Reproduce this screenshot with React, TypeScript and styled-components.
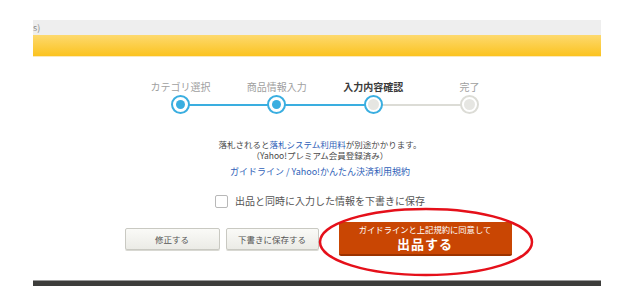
import styled, { createGlobalStyle } from 'styled-components'

const COLORS = {
	blue: '#3aaee0',
	link: '#2f5fb8',
	text: '#4a4a4a',
	grayLine: '#dcdcd6',
	orange: '#c94603',
	orangeDark: '#9c3300'
}

const STEPS = [
	{ label: 'カテゴリ選択', state: 'done' },
	{ label: '商品情報入力', state: 'done' },
	{ label: '入力内容確認', state: 'current' },
	{ label: '完了', state: 'todo' }
] as const

type StepState = (typeof STEPS)[number]['state']

const GlobalStyle = createGlobalStyle`
	html, body {
		margin: 0;
		padding: 0;
		background: #ffffff;
	}
	body {
		font-family: "Noto Sans CJK JP", "Noto Sans", sans-serif;
		color: ${COLORS.text};
	}
`

const App = () => {
	return (
		<>
			<GlobalStyle />
			<Page>
				<TopBar>s)</TopBar>
				<YellowBar />
				<Main>
					<Stepper>
						{STEPS.map((step, i) => (
							<Step key={step.label} $state={step.state} $first={i === 0}>
								<StepLabel $current={step.state === 'current'}>{step.label}</StepLabel>
								<Dot $state={step.state} />
							</Step>
						))}
					</Stepper>

					<Notice>
						<p>
							落札されると<Link>落札システム利用料</Link>が別途かかります。
						</p>
						<p>（Yahoo!プレミアム会員登録済み）</p>
					</Notice>
					<Terms>
						<Link>ガイドライン</Link> / <Link>Yahoo!かんたん決済利用規約</Link>
					</Terms>

					<CheckRow>
						<CheckBox type="checkbox" />
						<span>出品と同時に入力した情報を下書きに保存</span>
					</CheckRow>

					<Actions>
						<SubButton $width={95} $gap={6}>修正する</SubButton>
						<SubButton $width={93} $gap={20}>下書きに保存する</SubButton>
						<SubmitWrap>
							<SubmitButton>
								<small>ガイドラインと上記規約に同意して</small>
								<strong>出品する</strong>
							</SubmitButton>
							<Circle width="216" height="70" viewBox="0 0 216 70">
								<ellipse cx="108" cy="35" rx="106" ry="33" fill="none" stroke="#e5101a" strokeWidth="2.5" />
							</Circle>
						</SubmitWrap>
					</Actions>
				</Main>
				<Footer />
			</Page>
		</>
	)
}

const Page = styled.div`
	margin-left: 33px;
	width: 568px;
	padding-top: 20px;
`

const TopBar = styled.div`
	height: 15px;
	background: #eeeeee;
	font-size: 9px;
	line-height: 15px;
	color: #8a8a8a;
`

const YellowBar = styled.div`
	height: 21px;
	background: linear-gradient(to bottom, #fdd96e 0%, #fbc320 100%);
	border-bottom: 1px solid #fbe9bb;
`

const Main = styled.div`
	display: flex;
	flex-direction: column;
	align-items: center;
	padding: 23px 0 24px 6px;
`

const Stepper = styled.div`
	display: grid;
	grid-template-columns: repeat(4, 96.3px);
	margin-left: 10px;
`

const Step = styled.div<{ $state: StepState; $first: boolean }>`
	position: relative;
	display: flex;
	flex-direction: column;
	align-items: center;

	&::before {
		content: '';
		display: ${({ $first }) => ($first ? 'none' : 'block')};
		position: absolute;
		top: 24px;
		right: 50%;
		width: 100%;
		height: 2px;
		background: ${({ $state }) => ($state === 'todo' ? COLORS.grayLine : COLORS.blue)};
	}
`

const StepLabel = styled.div<{ $current: boolean }>`
	font-size: 10px;
	line-height: 14px;
	white-space: nowrap;
	color: ${({ $current }) => ($current ? '#3a3a3a' : '#a0a0a0')};
	font-weight: ${({ $current }) => ($current ? 700 : 400)};
	margin-bottom: 1px;
`

const Dot = styled.div<{ $state: StepState }>`
	position: relative;
	z-index: 1;
	box-sizing: border-box;
	width: 19px;
	height: 19px;
	border-radius: 50%;
	border: 2px solid ${({ $state }) => ($state === 'todo' ? '#dcdcd6' : COLORS.blue)};
	background: #ffffff;
	display: flex;
	align-items: center;
	justify-content: center;

	&::after {
		content: '';
		width: ${({ $state }) => ($state === 'done' ? 9 : 11)}px;
		height: ${({ $state }) => ($state === 'done' ? 9 : 11)}px;
		border-radius: 50%;
		background: ${({ $state }) => ($state === 'done' ? COLORS.blue : '#e6e6e2')};
	}
`

const Notice = styled.div`
	margin-top: 25px;
	font-size: 8.5px;
	line-height: 11px;
	text-align: center;
	color: ${COLORS.text};

	p {
		margin: 0;
	}
`

const Link = styled.span`
	color: ${COLORS.link};
`

const Terms = styled.div`
	margin-top: 5px;
	font-size: 9px;
	line-height: 12px;
	color: ${COLORS.link};
`

const CheckRow = styled.label`
	margin-top: 16px;
	display: flex;
	align-items: center;
	gap: 7px;
	font-size: 10px;
	line-height: 14px;
	color: #555555;
`

const CheckBox = styled.input`
	appearance: none;
	margin: 0;
	width: 13px;
	height: 13px;
	box-sizing: border-box;
	border: 1px solid #b8b8b8;
	border-radius: 2px;
	background: #ffffff;
`

const Actions = styled.div`
	margin-top: 14px;
	display: flex;
	align-items: center;
	margin-left: -4px;
`

const SubButton = styled.button<{ $width: number; $gap: number }>`
	flex: 0 0 auto;
	width: ${({ $width }) => $width}px;
	height: 22px;
	margin-right: ${({ $gap }) => $gap}px;
	padding: 0;
	box-sizing: border-box;
	border: 1px solid #c9c9c2;
	border-radius: 2px;
	background: linear-gradient(to bottom, #fafaf7 0%, #ebebe6 100%);
	box-shadow: 0 1px 0 #d8d8d2;
	font-family: inherit;
	font-size: 8.5px;
	color: #555555;
`

const SubmitWrap = styled.div`
	position: relative;
	flex: 0 0 auto;
`

const SubmitButton = styled.button`
	width: 173px;
	height: 34px;
	padding: 0 0 2px;
	box-sizing: border-box;
	border: none;
	border-bottom: 2px solid ${COLORS.orangeDark};
	border-radius: 2px;
	background: ${COLORS.orange};
	color: #ffffff;
	font-family: inherit;
	display: flex;
	flex-direction: column;
	align-items: center;
	justify-content: center;

	small {
		font-size: 8.3px;
		line-height: 12px;
	}

	strong {
		font-size: 13px;
		line-height: 17px;
		font-weight: 700;
		letter-spacing: 1px;
	}
`

const Circle = styled.svg`
	position: absolute;
	left: -21px;
	top: -15px;
	pointer-events: none;
`

const Footer = styled.div`
	height: 5px;
	border-top: 1px solid #9a9a9a;
	background: #3d3d3b;
`

export default App
